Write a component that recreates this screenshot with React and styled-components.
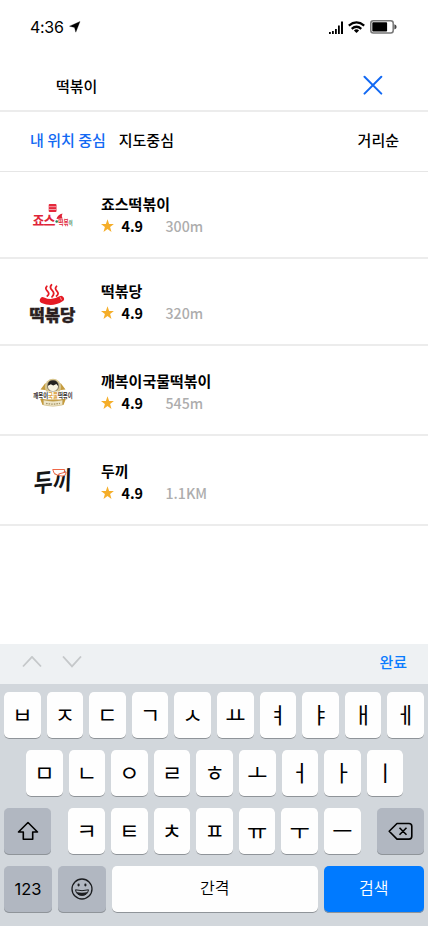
import React from "react";
import styled, { createGlobalStyle, css } from "styled-components";

const GlobalStyle = createGlobalStyle`
  * { box-sizing: border-box; }
  body { margin: 0; background: #fff; }
  button { border: 0; padding: 0; margin: 0; background: none; font: inherit; color: inherit; }
`;

const Screen = styled.main`
  display: flex;
  flex-direction: column;
  width: 428px;
  height: 926px;
  overflow: hidden;
  background: #fff;
  color: #000;
  font-family: "Noto Sans CJK KR", "Noto Sans", sans-serif;
`;

const StatusBar = styled.header`
  display: flex;
  justify-content: space-between;
  align-items: center;
  height: 54px;
  padding: 0 31.5px 0 30px;
`;

const StatusGroup = styled.div`
  display: flex;
  align-items: center;
  gap: 5px;
`;

const Clock = styled.span`
  font: 400 16px/20px Inter, sans-serif;
  letter-spacing: -0.3px;
`;

const SearchBar = styled.div`
  display: flex;
  justify-content: space-between;
  align-items: center;
  height: 58px;
  padding: 6px 45px 0 56px;
  border-bottom: 2px solid #ececec;
`;

const Query = styled.span`
  padding-top: 1px;
  font-size: 15px;
  line-height: 22px;
  font-weight: 500;
`;

const IconButton = styled.button`
  display: flex;
`;

const FilterBar = styled.nav`
  display: flex;
  align-items: center;
  gap: 13px;
  height: 60px;
  padding: 0 29px 3px 30px;
  border-bottom: 1px solid #e6e6e6;
`;

const FilterTab = styled.button`
  font-size: 15px;
  line-height: 22px;
  font-weight: 500;
  color: ${(p) => (p.$active ? "#1269f3" : "#000")};
  margin-left: ${(p) => (p.$end ? "auto" : "0")};
`;

const List = styled.ul`
  flex: 1;
  margin: 0;
  padding: 0;
  list-style: none;
`;

const Row = styled.li`
  display: flex;
  align-items: flex-start;
  height: ${(p) => p.$height}px;
  padding-top: ${(p) => p.$top}px;
  border-bottom: 2px solid #ececec;
`;

const LogoBox = styled.div`
  display: flex;
  width: 101px;
  padding-left: 24px;

  svg { display: block; overflow: visible; }
`;

const Name = styled.h2`
  margin: 0;
  font-size: 15px;
  line-height: 22px;
  font-weight: 700;
`;

const Meta = styled.div`
  display: flex;
  align-items: center;
  height: 22px;
  font-size: 14.3px;
  line-height: 22px;
`;

const Score = styled.span`
  width: 44px;
  margin-left: 6.5px;
  font-weight: 700;
`;

const Distance = styled.span`
  font-size: 14.2px;
  font-weight: 500;
  color: #adadad;
`;

const InputToolbar = styled.div`
  display: flex;
  align-items: center;
  gap: 20px;
  height: 40px;
  padding: 0 21px 5px 22px;
  background: #eef1f3;
`;

const Done = styled.button`
  margin-left: auto;
  font-size: 15px;
  line-height: 22px;
  font-weight: 500;
  color: #0a7cff;
`;

const Keyboard = styled.section`
  display: flex;
  flex-direction: column;
  gap: 11px;
  height: 242px;
  padding: 8px 4px 0;
  background: #d2d7dc;
`;

const KeyRow = styled.div`
  display: flex;
  gap: ${(p) => p.$gap || 6}px;
  height: 47px;
  padding: 0 ${(p) => p.$inset || 0}px;
  justify-content: ${(p) => (p.$spread ? "space-between" : "flex-start")};
`;

const KeyGroup = styled.div`
  display: flex;
  gap: 6px;
  padding-left: 1px;
`;

const tones = {
  light: css`background: #fefefe; color: #000;`,
  dark: css`background: #b1b7c1; color: #000;`,
  blue: css`background: #007aff; color: #fff;`,
};

const Key = styled.button`
  display: flex;
  align-items: center;
  justify-content: center;
  flex: none;
  width: ${(p) => p.$width || 36.6}px;
  height: 47px;
  padding-bottom: ${(p) => (p.$icon ? 1 : 5)}px;
  border-radius: 5px;
  box-shadow: inset 0 -1px 0 #8f9499;
  font-size: ${(p) => (p.$label ? 16 : 22)}px;
  line-height: 30px;
  font-weight: ${(p) => (p.$label ? 350 : 400)};
  ${(p) => tones[p.$tone || "light"]}
`;

const NumberLabel = styled.span`
  padding-top: 4px;
  font: 400 16.5px/20px Inter, sans-serif;
`;

const LocationIcon = () => (
  <svg width="12" height="12" viewBox="0 0 12 12">
    <path d="M11 .5 6.8 11.2 5.5 6.4 .5 5.2Z" stroke="#000" strokeWidth=".3" />
  </svg>
);

const SignalIcon = () => (
  <svg width="14" height="13" viewBox="0 0 14 13">
    <path d="M0 11h1.8v2H0zM3 10h1.8v3H3zM6 8h1.8v5H6zM9 4.5h1.8V13H9zM12 .5h2V13h-2z" />
  </svg>
);

const WifiIcon = () => (
  <svg width="17" height="12" viewBox="0 0 17 12" fill="none" stroke="#000" strokeWidth="2.2">
    <path d="M.8 4.6Q8.5-1.8 16.2 4.6M3.7 7.8Q8.5 3.7 13.3 7.8" />
    <path d="M5.9 9.4Q8.5 7.3 11.1 9.4L8.5 12Z" fill="#000" stroke="none" />
  </svg>
);

const BatteryIcon = () => (
  <svg width="27" height="14" viewBox="0 0 27 14">
    <rect x=".8" y=".8" width="22.4" height="12.2" rx="2.5" fill="none" stroke="#777" strokeWidth="1.5" />
    <rect x="2.3" y="2.3" width="14.8" height="9.2" rx=".8" />
    <path d="M24.4 4.2Q26.6 5 26.6 6.9T24.4 9.6Z" fill="#444" />
  </svg>
);

const CloseIcon = () => (
  <svg width="20" height="20" viewBox="0 0 20 20" stroke="#1269f3" strokeWidth="2" strokeLinecap="round">
    <path d="M1.5 1.8 18.3 18.6M18.3 1.8 1.5 18.6" />
  </svg>
);

const StarIcon = () => (
  <svg width="14" height="14" viewBox="0 0 14 14" fill="#f5ae2a">
    <path d="M6.5 .3 8.1 5 12.9 5.1 9.1 8 10.5 12.9 6.5 10 2.5 12.9 3.9 8 0 5.1 4.9 5Z" />
  </svg>
);

const ChevronIcon = ({ down }) => (
  <svg width="20" height="12" viewBox="0 0 20 12" fill="none" stroke="#c5c8ca" strokeWidth="1.8">
    <path d={down ? "M1 .5 10 10.3 19 .5" : "M1 10.5 10 .9 19 10.5"} />
  </svg>
);

const ShiftIcon = () => (
  <svg width="22" height="20" viewBox="0 0 22 20" fill="none" stroke="#000" strokeWidth="1.6" strokeLinejoin="round">
    <path d="M11 1.5 1.5 11H6.3v7.2h9.4V11h4.8Z" />
  </svg>
);

const BackspaceIcon = () => (
  <svg width="25" height="19" viewBox="0 0 25 19" fill="none" stroke="#000" strokeWidth="1.6" strokeLinejoin="round">
    <path d="M9 1.5h12Q23.8 1.5 23.8 4.3v10q0 2.8-2.8 2.8H9L1.2 9.3ZM11.5 5.8l7 7M18.5 5.8l-7 7" />
  </svg>
);

const SmileIcon = () => (
  <svg width="22" height="22" viewBox="0 0 22 22" fill="none" stroke="#1b1d20" strokeWidth="1.3">
    <circle cx="11" cy="11" r="10" />
    <ellipse cx="7.6" cy="7" rx="1.1" ry="1.4" fill="#1b1d20" stroke="none" />
    <ellipse cx="14.4" cy="7" rx="1.1" ry="1.4" fill="#1b1d20" stroke="none" />
    <path d="M4.5 11.8Q11 13.6 17.5 11.8 16.6 17.4 11 17.4T4.5 11.8Z" strokeWidth="1" />
    <path d="M5.3 14Q11 15.3 16.7 14 15 17.6 11 17.6T5.3 14Z" fill="#1b1d20" stroke="none" />
  </svg>
);

const brandFont = '"Noto Sans CJK KR", sans-serif';

const JawsLogo = () => (
  <svg width="56" height="42" viewBox="0 0 56 42" fontFamily={brandFont} fontWeight="700">
    <rect x="24.7" y="11" width="7.8" height="8" rx="1" fill="#e5293c" />
    <path d="M25 13.7h7.2M25 16.5h7.2" stroke="#f8bdc3" strokeWidth=".8" />
    <text x="8.5" y="31.5" fontSize="13" textLength="23" fill="#df2438">죠스</text>
    <path d="M32.5 26Q33.5 21.5 38.5 20.5 37 23 38.5 25.5Z" fill="#df2438" />
    <circle cx="32.7" cy="28.5" r="1.3" fill="#268153" />
    <text x="34.2" y="32" fontSize="7.4" textLength="14.3" lengthAdjust="spacingAndGlyphs" fill="#df2438">
      떡볶<tspan fontSize="5.4" fill="#268153">이</tspan>
    </text>
  </svg>
);

const DangLogo = () => (
  <svg width="56" height="46" viewBox="0 0 56 46" fontFamily={brandFont} fontWeight="900">
    <g fill="none" stroke="#e51b24" strokeWidth="1.8" strokeLinecap="round">
      <path d="M22.8 6.3q-2.2 2 .6 4.8t-.1 4.9M27.5 4.8q-2.4 2.5 .7 5.6t-.2 6.4M32.5 6.3q-2.2 2 .4 4.8t-.4 4.9" />
    </g>
    <path d="M18.8 20.2Q28 24.5 37 18.8" fill="none" stroke="#e51b24" strokeWidth="6" strokeLinecap="round" />
    <path d="m36.2 17.2 1.3 3" stroke="#ffb9bd" strokeWidth=".8" />
    <text x="5.4" y="40.8" fontSize="15.4" textLength="46" lengthAdjust="spacingAndGlyphs" fill="#2a2021" stroke="#2a2021" strokeWidth=".35">떡볶당</text>
  </svg>
);

const KkaebokLogo = () => (
  <svg width="56" height="42" viewBox="0 0 56 42" fontFamily={brandFont} fontWeight="700">
    <path d="M16.5 19.5l4.5-6h16l4.5 6-4.5 .5H21Z" fill="#c59b3d" />
    <circle cx="29" cy="17" r="8.2" fill="#d8c68f" />
    <circle cx="29" cy="16" r="5.6" fill="#faf5e2" stroke="#4b4335" strokeWidth=".6" />
    <path d="M24 15.8Q23.5 10.6 29 10.6t5.2 5.6l-1.8-2.1-3.2 1.3-2.4-1.2Z" fill="#26231f" />
    <path d="M16 28.5l6 1h14l6-1-2.5 6.5h-21Z" fill="#c59b3d" />
    <path d="M19.5 30q9.5 2.5 19 0v5q-9.5 2.5-19 0Z" fill="#eee6c9" stroke="#c2aa6b" strokeWidth=".5" />
    <path d="M22 33.3q7 1.6 14 0" fill="none" stroke="#a79668" strokeWidth="1.3" strokeDasharray="1.6 1" />
    <rect x="9" y="21.5" width="40" height="7" rx="2" fill="#fff" />
    <text x="9.3" y="27.6" fontSize="6.6" textLength="39.4" lengthAdjust="spacingAndGlyphs" fill="#37312c">
      깨복이<tspan fill="#dda13b">국물</tspan>떡볶이
    </text>
  </svg>
);

const DookkiLogo = () => (
  <svg width="56" height="50" viewBox="0 0 56 50" fontFamily={brandFont}>
    <text transform="translate(9.5 32.5) rotate(-5) skewX(-7) scale(.92 1.12)" fontSize="22.5" fontWeight="600" fill="#151515">두끼</text>
    <g fill="#fff" stroke="#ef6848" strokeWidth="1">
      <path d="M28.7 9.5h12q-.5 5.5-4.6 5.5h-2.8q-4-.8-4.6-5.5Z" />
      <path d="M34.5 14l7.6-2q.4 3.3-3 4-3.2.8-4.6-2Z" />
    </g>
  </svg>
);

const restaurants = [
  { name: "죠스떡볶이", distance: "300m", Logo: JawsLogo, height: 87, top: 21 },
  { name: "떡볶당", distance: "320m", Logo: DangLogo, height: 87, top: 21 },
  { name: "깨복이국물떡볶이", distance: "545m", Logo: KkaebokLogo, height: 90, top: 24 },
  { name: "두끼", distance: "1.1KM", Logo: DookkiLogo, height: 90, top: 24 },
];

const topKeys = [..."ㅂㅈㄷㄱㅅㅛㅕㅑㅐㅔ"];
const homeKeys = [..."ㅁㄴㅇㄹㅎㅗㅓㅏㅣ"];
const lowerKeys = [..."ㅋㅌㅊㅍㅠㅜㅡ"];

export default function App() {
  return (
    <>
      <GlobalStyle />
      <Screen>
        <StatusBar>
          <StatusGroup>
            <Clock>4:36</Clock>
            <LocationIcon />
          </StatusGroup>
          <StatusGroup>
            <SignalIcon />
            <WifiIcon />
            <BatteryIcon />
          </StatusGroup>
        </StatusBar>
        <SearchBar>
          <Query>떡볶이</Query>
          <IconButton aria-label="지우기"><CloseIcon /></IconButton>
        </SearchBar>
        <FilterBar>
          <FilterTab $active>내 위치 중심</FilterTab>
          <FilterTab>지도중심</FilterTab>
          <FilterTab $end>거리순</FilterTab>
        </FilterBar>
        <List>
          {restaurants.map(({ name, distance, Logo, height, top }) => (
            <Row key={name} $height={height} $top={top}>
              <LogoBox><Logo /></LogoBox>
              <div>
                <Name>{name}</Name>
                <Meta>
                  <StarIcon />
                  <Score>4.9</Score>
                  <Distance>{distance}</Distance>
                </Meta>
              </div>
            </Row>
          ))}
        </List>
        <InputToolbar>
          <IconButton aria-label="이전"><ChevronIcon /></IconButton>
          <IconButton aria-label="다음"><ChevronIcon down /></IconButton>
          <Done>완료</Done>
        </InputToolbar>
        <Keyboard>
          <KeyRow>
            {topKeys.map((k) => <Key key={k}>{k}</Key>)}
          </KeyRow>
          <KeyRow $inset={22}>
            {homeKeys.map((k) => <Key key={k}>{k}</Key>)}
          </KeyRow>
          <KeyRow $spread>
            <Key $tone="dark" $icon $width={47} aria-label="Shift"><ShiftIcon /></Key>
            <KeyGroup>
              {lowerKeys.map((k) => <Key key={k}>{k}</Key>)}
            </KeyGroup>
            <Key $tone="dark" $icon $width={47} aria-label="삭제"><BackspaceIcon /></Key>
          </KeyRow>
          <KeyRow $gap={6}>
            <Key $tone="dark" $width={48} $label><NumberLabel>123</NumberLabel></Key>
            <Key $tone="dark" $icon $width={48} aria-label="이모티콘"><SmileIcon /></Key>
            <Key $width={205.6} $label>간격</Key>
            <Key $tone="blue" $width={100.4} $label>검색</Key>
          </KeyRow>
        </Keyboard>
      </Screen>
    </>
  );
}
